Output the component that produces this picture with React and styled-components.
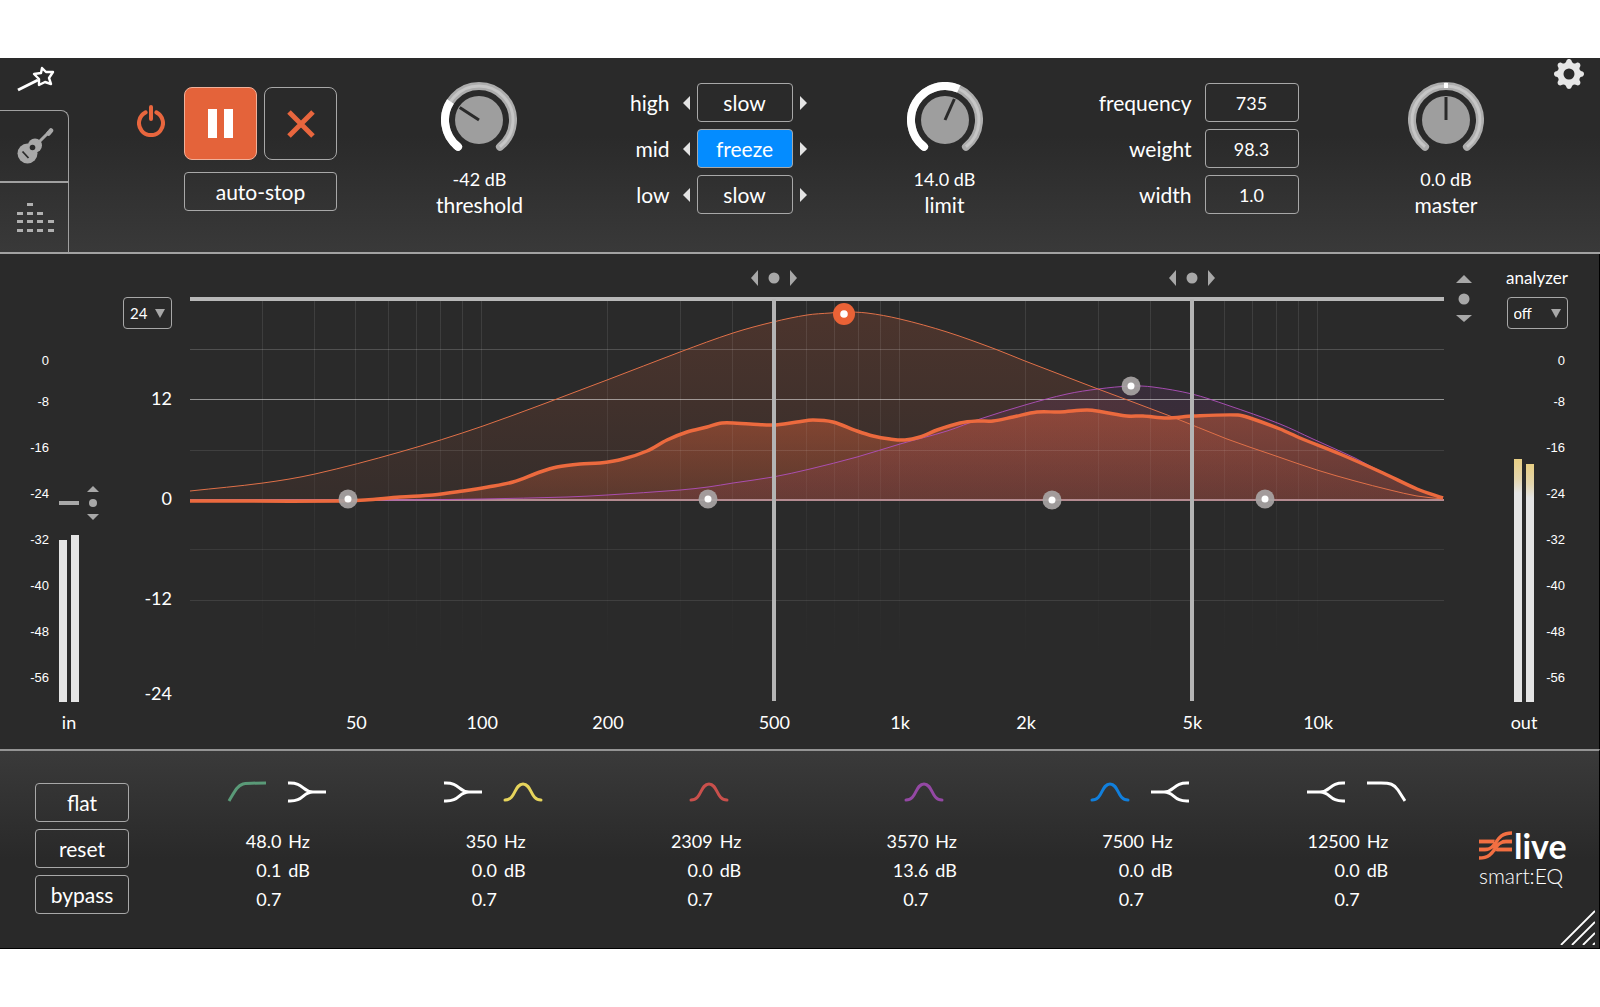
import { useState } from "react";
import styled, { createGlobalStyle } from "styled-components";
import { BsGearFill } from "react-icons/bs";

const FREQUENCIES = [
  30, 40, 50, 60, 70, 80, 90, 100, 200, 300, 400, 600, 700, 800, 900, 1000,
  2000, 3000, 4000, 6000, 7000, 8000, 9000, 10000,
];

const AXIS = [
  { hz: 50, text: "50" },
  { hz: 100, text: "100" },
  { hz: 200, text: "200" },
  { hz: 500, text: "500" },
  { hz: 1000, text: "1k" },
  { hz: 2000, text: "2k" },
  { hz: 5000, text: "5k" },
  { hz: 10000, text: "10k" },
];

const SCALE = ["0", "-8", "-16", "-24", "-32", "-40", "-48", "-56"];

const BANDS = [
  { id: 1, icons: [["cut", "#5a9a78"], ["join", "#fff"]], freq: "48.0", gain: "0.1", q: "0.7" },
  { id: 2, icons: [["join", "#fff"], ["bell", "#e6d45c"]], freq: "350", gain: "0.0", q: "0.7" },
  { id: 3, icons: [["bell", "#c9504c"]], freq: "2309", gain: "0.0", q: "0.7" },
  { id: 4, icons: [["bell", "#9448a4"]], freq: "3570", gain: "13.6", q: "0.7" },
  { id: 5, icons: [["bell", "#117fdc"], ["split", "#fff"]], freq: "7500", gain: "0.0", q: "0.7" },
  { id: 6, icons: [["split", "#fff"], ["highcut", "#fff"]], freq: "12500", gain: "0.0", q: "0.7" },
];

const SHAPES = {
  cut: "M2 20 C8 10 10 5 16 3 C22 2 30 2 39 2",
  highcut: "M1 2 H15 C24 2 28 3 32 9 L39 20",
  join: "M1 2 C17 1 15 11 26 11 H39 M1 20 C17 21 15 11 26 11",
  split: "M39 2 C23 1 25 11 14 11 H1 M39 20 C23 21 25 11 14 11",
  bell: "M2 19 C13 19 11 3 20 3 C29 3 27 19 38 19",
};

const WEIGHT = [
  [0, 231], [73, 223], [125, 214], [210, 192], [293, 166], [417, 120], [490, 92],
  [543, 73], [583, 62], [617, 55], [640, 53], [654, 52], [677, 53], [710, 59],
  [757, 72], [805, 89], [835, 101], [908, 129], [980, 156],
  [1037, 179], [1083, 195], [1127, 210], [1165, 221], [1200, 230], [1227, 236], [1253, 239],
];

const PURPLE = [
  [0, 240], [210, 240], [290, 239], [377, 237], [417, 235], [490, 230], [518, 227],
  [543, 223], [583, 217], [620, 209], [667, 197], [710, 184], [757, 171], [790, 159],
  [835, 145], [877, 134], [908, 129], [941, 126], [963, 127], [1002, 134],
  [1037, 145], [1090, 164], [1123, 179], [1165, 198], [1180, 206], [1226, 228], [1253, 239],
];

const FILTER = [
  [0, 241], [150, 241], [175, 240], [210, 237], [243, 235], [273, 231], [298, 227],
  [323, 222], [350, 212], [367, 207], [390, 204], [410, 203], [433, 199], [457, 191],
  [477, 180], [497, 172], [517, 167], [532, 163], [560, 164], [583, 165], [607, 162],
  [623, 160], [643, 162], [667, 171], [683, 176], [700, 179], [715, 180], [730, 177],
  [747, 170], [770, 163], [787, 161], [803, 161], [823, 157], [847, 152], [870, 152],
  [897, 150], [913, 152], [937, 156], [953, 156], [977, 158], [1003, 156], [1048, 155],
  [1060, 158], [1090, 169], [1110, 178], [1150, 194], [1193, 213], [1227, 229], [1253, 238],
];

const NODES = [
  [158, 239], [518, 239], [862, 240], [1075, 239], [941, 126],
];

const toX = (hz) => 418 * Math.log10(hz / 20);

function slope(points, i) {
  const a = points[Math.max(i - 1, 0)];
  const b = points[Math.min(i + 1, points.length - 1)];
  return (b[1] - a[1]) / (b[0] - a[0]);
}

// cubic spline through all the points, x always grows
function toPath(points) {
  let d = `M${points[0][0]} ${points[0][1]}`;
  for (let i = 0; i < points.length - 1; i++) {
    const [x1, y1] = points[i];
    const [x2, y2] = points[i + 1];
    const third = (x2 - x1) / 3;
    d += ` C${x1 + third} ${y1 + third * slope(points, i)}`;
    d += ` ${x2 - third} ${y2 - third * slope(points, i + 1)} ${x2} ${y2}`;
  }
  return d;
}

const toArea = (points) => `${toPath(points)} L1253 240 L0 240 Z`;

function polar(angle, r) {
  const rad = (angle * Math.PI) / 180;
  return [38 + r * Math.sin(rad), 38 - r * Math.cos(rad)];
}

function arc(from, to) {
  const [x1, y1] = polar(from, 34);
  const [x2, y2] = polar(to, 34);
  return `M${x1} ${y1} A34 34 0 ${to - from > 180 ? 1 : 0} 1 ${x2} ${y2}`;
}

function Knob({ label, value, angle, bipolar }) {
  const [px, py] = polar(angle, 23);
  return (
    <KnobLabel>
      <Dial>
        <svg width="76" height="76" viewBox="0 0 76 76">
          <path d={arc(-142, 142)} fill="none" stroke="#adadad" strokeWidth="8" strokeLinecap="round" />
          <path d={arc(-142, 142)} fill="none" stroke="#c6c6c6" strokeWidth="3" />
          {bipolar ? (
            <rect x="36" y="1" width="4" height="5" fill="#fff" />
          ) : (
            <>
              <path d={arc(-142, -138)} fill="none" stroke="#fff" strokeWidth="8" strokeLinecap="round" />
              <path d={arc(-142, angle)} fill="none" stroke="#fff" strokeWidth="8" />
            </>
          )}
          <circle cx="38" cy="38" r="24" fill="#9e9e9e" />
          <path d={`M38 38 L${px} ${py}`} stroke="#2a2a2a" strokeWidth="3" />
        </svg>
        <HiddenRange type="range" min="-142" max="142" defaultValue={angle} aria-label={label} />
      </Dial>
      <span>{value}</span>
      <span>{label}</span>
    </KnobLabel>
  );
}

function Speed({ label, value, active }) {
  return (
    <SpeedRow>
      <SpeedLabel>{label}</SpeedLabel>
      <Arrow aria-label={`${label} slower`}>
        <svg width="7" height="14" viewBox="0 0 7 14"><path d="M7 0 V14 L0 7 Z" fill="#e4e4e4" /></svg>
      </Arrow>
      <Box width={96} active={active}>{value}</Box>
      <Arrow aria-label={`${label} faster`}>
        <svg width="7" height="14" viewBox="0 0 7 14"><path d="M0 0 V14 L7 7 Z" fill="#e4e4e4" /></svg>
      </Arrow>
    </SpeedRow>
  );
}

function Field({ label, initial }) {
  const [value, setValue] = useState(initial);
  return (
    <FieldRow>
      <span>{label}</span>
      <input value={value} onChange={(e) => setValue(e.target.value)} />
    </FieldRow>
  );
}

function Picker({ label, options, width }) {
  return (
    <PickerBox width={width}>
      <select aria-label={label}>
        {options.map((o) => (
          <option key={o}>{o}</option>
        ))}
      </select>
      <svg width="10" height="9" viewBox="0 0 10 9"><path d="M0 0 H10 L5 9 Z" fill="#a8a8a8" /></svg>
    </PickerBox>
  );
}

function Crossover({ hz }) {
  const x = Math.round(toX(hz));
  return (
    <g>
      <rect x={x - 2} y="39" width="4" height="402" fill="#b4b4b4" />
      <g fill="#a8a8a8">
        <path d={`M${x - 16} 10 V26 L${x - 23} 18 Z`} />
        <circle cx={x} cy="18" r="5.5" />
        <path d={`M${x + 16} 10 V26 L${x + 23} 18 Z`} />
      </g>
    </g>
  );
}

function Chart() {
  return (
    <Plot viewBox="0 0 1254 480" role="img" aria-label="equalizer curve">
      <defs>
        <linearGradient id="grid" gradientUnits="userSpaceOnUse" x1="0" y1="40" x2="0" y2="400">
          <stop offset="0" stopColor="#fff" stopOpacity="0.1" />
          <stop offset="0.5" stopColor="#fff" stopOpacity="0.05" />
          <stop offset="1" stopColor="#fff" stopOpacity="0" />
        </linearGradient>
        <linearGradient id="weight" gradientUnits="userSpaceOnUse" x1="0" y1="50" x2="0" y2="240">
          <stop offset="0" stopColor="#e8643a" stopOpacity="0.18" />
          <stop offset="1" stopColor="#e8643a" stopOpacity="0.06" />
        </linearGradient>
        <linearGradient id="filter" gradientUnits="userSpaceOnUse" x1="0" y1="150" x2="0" y2="240">
          <stop offset="0" stopColor="#e8643a" stopOpacity="0.42" />
          <stop offset="1" stopColor="#e8643a" stopOpacity="0.2" />
        </linearGradient>
        <linearGradient id="purple" gradientUnits="userSpaceOnUse" x1="0" y1="126" x2="0" y2="240">
          <stop offset="0" stopColor="#9040a0" stopOpacity="0.14" />
          <stop offset="1" stopColor="#b04070" stopOpacity="0.14" />
        </linearGradient>
      </defs>

      <path d={toArea(WEIGHT)} fill="url(#weight)" />
      <path d={toArea(PURPLE)} fill="url(#purple)" />
      <path d={toArea(FILTER)} fill="url(#filter)" />

      {FREQUENCIES.map((hz) => (
        <rect key={hz} x={Math.floor(toX(hz)) - 1} y="41" width="1" height="360" fill="url(#grid)" />
      ))}
      <g fill="#fff">
        <rect y="89" width="1254" height="1" fillOpacity="0.18" />
        <rect y="139" width="1254" height="1" fillOpacity="0.5" />
        <rect y="190" width="1254" height="1" fillOpacity="0.1" />
        <rect y="289" width="1254" height="1" fillOpacity="0.08" />
        <rect y="340" width="1254" height="1" fillOpacity="0.1" />
      </g>
      <rect y="239" width="1254" height="2" fill="#b48a90" />
      <rect y="37" width="1254" height="4" fill="#b8b8b8" />

      <path d={toPath(PURPLE)} fill="none" stroke="#b050bc" strokeOpacity="0.9" />
      <path d={toPath(WEIGHT)} fill="none" stroke="#e07048" />
      <path d={toPath(FILTER)} fill="none" stroke="#ec6a3e" strokeWidth="3.5" />

      <Crossover hz={500} />
      <Crossover hz={5000} />

      {NODES.map(([x, y]) => (
        <g key={x}>
          <circle cx={x} cy={y} r="9.5" fill="#a8a4a4" fillOpacity="0.92" />
          <circle cx={x} cy={y} r="3.5" fill="#fff" />
        </g>
      ))}
      <circle cx="654" cy="54" r="11" fill="#ea6236" />
      <circle cx="654" cy="54" r="3.8" fill="#fff" />

      {AXIS.map((tick) => (
        <text key={tick.hz} x={toX(tick.hz)} y="469" textAnchor="middle">{tick.text}</text>
      ))}
    </Plot>
  );
}

export default function App() {
  return (
    <Page>
      <GlobalStyle />
      <Header>
        <Rail>
          <RailTop aria-label="learn">
            <svg width="38" height="26" viewBox="0 0 38 26" fill="none" stroke="#fff">
              <path d="M1 24 L21 14" strokeWidth="3" />
              <path d="M25 2 L29 6 L36 6 L32 12 L34 18 L28 16 L22 19 L22 13 L17 8 L24 7 Z" strokeWidth="2.4" strokeLinejoin="round" />
            </svg>
          </RailTop>
          <RailTab first aria-label="profile">
            <svg width="37" height="37" viewBox="0 0 37 37">
              <g fill="#a8a8a8">
                <circle cx="10.5" cy="25.5" r="10" />
                <circle cx="18" cy="17.5" r="7" />
              </g>
              <path d="M19 17 L32 4" stroke="#a8a8a8" strokeWidth="3" />
              <path d="M31.5 5.5 L34 2.5" stroke="#a8a8a8" strokeWidth="4.5" strokeLinecap="round" />
              <circle cx="15.5" cy="19.5" r="2.8" fill="#2a2a2a" />
              <path d="M5.5 23.5 L11.5 30" stroke="#2a2a2a" strokeWidth="1.8" />
            </svg>
          </RailTab>
          <RailTab aria-label="states">
            <svg width="37" height="31" viewBox="0 0 37 31" fill="#b0b0b0">
              <rect x="10" y="1" width="6" height="3" />
              {[0, 10, 20].map((x) => <rect key={x} x={x} y="10" width="6" height="3" />)}
              {[0, 10, 20, 31].map((x) => <rect key={x} x={x} y="18" width="6" height="3" />)}
              {[0, 10, 20, 31].map((x) => <rect key={x} x={x} y="27" width="6" height="3" />)}
            </svg>
          </RailTab>
        </Rail>
        <Controls>
          <Transport>
            <IconButton aria-label="power">
              <svg width="28" height="32" viewBox="0 0 28 32" fill="none" stroke="#e8663e" strokeWidth="4">
                <path d="M8.6 7.4 A12 12 0 1 0 19.4 7.4" strokeLinecap="round" />
                <path d="M14 2 V14" strokeLinecap="round" />
              </svg>
            </IconButton>
            <Buttons>
              <Square active aria-label="pause">
                <svg width="25" height="29" viewBox="0 0 25 29" fill="#fff">
                  <rect width="9" height="29" />
                  <rect x="16" width="9" height="29" />
                </svg>
              </Square>
              <Square aria-label="cancel">
                <svg width="28" height="28" viewBox="0 0 28 28" stroke="#e8663e" strokeWidth="5">
                  <path d="M2 2 L26 26 M26 2 L2 26" />
                </svg>
              </Square>
              <AutoStop>auto-stop</AutoStop>
            </Buttons>
          </Transport>
          <Knob label="threshold" value="-42 dB" angle={-57} />
          <Stack>
            <Speed label="high" value="slow" />
            <Speed label="mid" value="freeze" active />
            <Speed label="low" value="slow" />
          </Stack>
          <Knob label="limit" value="14.0 dB" angle={24} />
          <Stack>
            <Field label="frequency" initial="735" />
            <Field label="weight" initial="98.3" />
            <Field label="width" initial="1.0" />
          </Stack>
          <Knob label="master" value="0.0 dB" angle={0} bipolar />
          <Gear aria-label="settings">
            <BsGearFill size={30} color="#e6e6e6" />
          </Gear>
        </Controls>
      </Header>

      <Display>
        <InputMeter>
          <Scale>
            {SCALE.map((s) => <li key={s}>{s}</li>)}
          </Scale>
          <MeterStack top={144}>
            <LevelHandle>
              <i />
              <svg width="12" height="34" viewBox="0 0 12 34" fill="#a8a8a8">
                <path d="M0 6 H12 L6 0 Z" />
                <circle cx="6" cy="17" r="4" />
                <path d="M0 28 H12 L6 34 Z" />
              </svg>
            </LevelHandle>
            <Bars>
              <Bar style={{ height: 162 }} />
              <Bar style={{ height: 167 }} />
            </Bars>
            <MeterName>in</MeterName>
          </MeterStack>
        </InputMeter>
        <GainAxis>
          <Picker label="range" options={["24", "12", "6"]} width={49} />
          <ul>
            <li>12</li>
            <li>0</li>
            <li>-12</li>
            <li>-24</li>
          </ul>
        </GainAxis>
        <ChartArea>
          <Chart />
        </ChartArea>
        <RangeHandle width="16" height="50" viewBox="0 0 16 50" fill="#a8a8a8">
          <path d="M0 9 H16 L8 1 Z" />
          <circle cx="8" cy="25" r="5.5" />
          <path d="M0 41 H16 L8 48 Z" />
        </RangeHandle>
        <OutputPanel>
          <Analyzer>
            <span>analyzer</span>
            <Picker label="analyzer" options={["off", "in", "out"]} width={61} />
          </Analyzer>
          <OutputMeter>
            <MeterStack top={117}>
              <Bars>
                <Bar hot style={{ height: 243 }} />
                <Bar hot style={{ height: 238 }} />
              </Bars>
              <MeterName>out</MeterName>
            </MeterStack>
            <Scale>
              {SCALE.map((s) => <li key={s}>{s}</li>)}
            </Scale>
          </OutputMeter>
        </OutputPanel>
      </Display>

      <Footer>
        <FooterButtons>
          <Box width={94}>flat</Box>
          <Box width={94}>reset</Box>
          <Box width={94}>bypass</Box>
        </FooterButtons>
        <Bands>
          {BANDS.map((band) => (
            <Band key={band.id}>
              <BandIcons>
                {band.icons.map(([shape, color]) => (
                  <IconButton key={shape} aria-label={`band ${band.id} ${shape}`}>
                    <svg width="40" height="22" viewBox="0 0 40 22" fill="none" stroke={color} strokeWidth="3">
                      <path d={SHAPES[shape]} strokeLinecap={shape === "bell" ? "round" : "butt"} />
                    </svg>
                  </IconButton>
                ))}
              </BandIcons>
              <Values>
                <b>{band.freq}</b>
                <span>Hz</span>
                <b>{band.gain}</b>
                <span>dB</span>
                <b>{band.q}</b>
              </Values>
            </Band>
          ))}
        </Bands>
        <Brand>
          <BrandLine>
            <svg width="33" height="30" viewBox="0 0 33 30" fill="none" stroke="#f26f42" strokeWidth="3.4">
              <path d="M0 10.5 H33 M0 18.5 H33" />
              <path d="M0 27 C18 27 14 2 33 2" stroke="#2a2a2a" strokeWidth="6" />
              <path d="M0 27 C18 27 14 10.5 27 10.5 H33 M0 18.5 H6 C19 18.5 15 2 33 2" />
              <path d="M18 18.5 H33 M0 10.5 H15" />
            </svg>
            <strong>live</strong>
          </BrandLine>
          <span>smart:EQ</span>
        </Brand>
        <Grip width="35" height="35" viewBox="0 0 35 35" stroke="#fff" strokeWidth="1.8">
          <path d="M1 35 L35 1 M12 35 L35 12 M23 35 L35 23 M33 35 L35 33" />
        </Grip>
      </Footer>
    </Page>
  );
}

const GlobalStyle = createGlobalStyle`
  * {
    box-sizing: border-box;
  }

  body {
    margin: 0;
    background-color: #fff;
  }

  ul {
    margin: 0;
    padding: 0;
    list-style: none;
  }

  svg {
    display: block;
  }

  button, input, select {
    font: inherit;
    color: inherit;
    margin: 0;
    padding: 0;
    background: none;
    border: none;
  }
`;

const Page = styled.main`
  margin-top: 58px;
  font-family: Lato, "Liberation Sans", sans-serif;
  font-size: 21px;
  line-height: 26px;
  color: #fff;
  background-color: #2a2a2a;
`;

const Header = styled.header`
  display: flex;
  background: linear-gradient(#2a2a2a 40%, #393939);
  border-bottom: 2px solid #a2a2a2;
`;

const Rail = styled.nav`
  width: 69px;
  display: flex;
  flex-direction: column;
`;

const RailTop = styled.button`
  height: 52px;
  padding: 8px 0 18px 17px;
`;

const RailTab = styled.button`
  height: 71px;
  display: flex;
  align-items: center;
  padding-left: 17px;
  border-top: ${(props) => (props.first ? "1px" : "2px")} solid #a0a0a0;
  border-right: 1px solid #a0a0a0;
  border-radius: ${(props) => (props.first ? "0 8px 0 0" : "0")};
`;

const Controls = styled.div`
  flex: 1;
  display: grid;
  grid-template-columns: 336fr 149fr 326fr 129fr 378fr 118fr 95fr;
  justify-items: center;
  align-items: start;
`;

const Transport = styled.div`
  display: flex;
  gap: 19px;
  padding-top: 29px;
`;

const IconButton = styled.button`
  align-self: flex-start;
  cursor: pointer;

  ${Transport} > & {
    padding-top: 18px;
  }
`;

const Buttons = styled.div`
  display: grid;
  grid-template-columns: 73px 73px;
  column-gap: 7px;
  row-gap: 12px;
`;

const Square = styled.button`
  height: 73px;
  display: flex;
  align-items: center;
  justify-content: center;
  border: 1px solid ${(props) => (props.active ? "#f0b09a" : "#a8a8a8")};
  border-radius: 8px;
  background-color: ${(props) => (props.active ? "#e4633a" : "transparent")};
`;

const Box = styled.button`
  width: ${(props) => props.width}px;
  height: 39px;
  border: 1px solid #a8a8a8;
  border-radius: 4px;
  background-color: ${(props) => (props.active ? "#048cff" : "transparent")};
`;

const AutoStop = styled(Box)`
  grid-column: 1 / 3;
  width: 100%;
`;

const KnobLabel = styled.label`
  display: flex;
  flex-direction: column;
  align-items: center;
  padding-top: 24px;

  span:first-of-type {
    font-size: 18px;
  }
`;

const Dial = styled.div`
  position: relative;
  margin-bottom: 8px;
`;

const HiddenRange = styled.input`
  position: absolute;
  inset: 0;
  width: 100%;
  height: 100%;
  opacity: 0;
`;

const Stack = styled.div`
  display: flex;
  flex-direction: column;
  gap: 7px;
  padding-top: 25px;
`;

const SpeedRow = styled.div`
  display: flex;
  align-items: center;
  gap: 7px;
`;

const SpeedLabel = styled.span`
  width: 42px;
  margin-right: 6px;
  text-align: right;
`;

const Arrow = styled.button`
  width: 7px;
  height: 14px;
`;

const FieldRow = styled.label`
  display: flex;
  align-items: center;
  gap: 13px;

  span {
    width: 94px;
    text-align: right;
  }

  input {
    width: 94px;
    height: 39px;
    border: 1px solid #a8a8a8;
    border-radius: 4px;
    font-size: 18px;
    text-align: center;
  }
`;

const Gear = styled.button`
  justify-self: end;
  margin: 1px 16px 0 0;
`;

const Display = styled.section`
  display: grid;
  grid-template-columns: 123px 49px minmax(0, 1fr) 16px 127px;
  align-items: start;
  border-right: 1px solid #000;
`;

const InputMeter = styled.div`
  display: flex;
  padding-top: 88px;
`;

const Scale = styled.ul`
  width: 49px;
  font-family: "Liberation Sans", sans-serif;
  font-size: 13px;
  text-align: right;

  li {
    line-height: 46px;
  }

  li:first-child {
    line-height: 37px;
  }
`;

const MeterStack = styled.div`
  margin-left: 10px;
  padding-top: ${(props) => props.top}px;
`;

const LevelHandle = styled.div`
  display: flex;
  align-items: center;
  gap: 8px;
  margin-bottom: 15px;

  i {
    width: 20px;
    height: 4px;
    background-color: #a8a8a8;
  }
`;

const Bars = styled.div`
  display: flex;
  align-items: flex-end;
  gap: 4px;
`;

const Bar = styled.div`
  width: 8px;
  background: ${(props) =>
    props.hot ? "linear-gradient(#e8cf84, #e4d6ae 20px, #e4e4e4 34px)" : "#e4e4e4"};
`;

const MeterName = styled.div`
  width: 20px;
  margin-top: 7px;
  display: flex;
  justify-content: center;
  font-size: 18px;
`;

const GainAxis = styled.div`
  padding-top: 43px;
  font-size: 18px;
  text-align: right;

  ul {
    margin-top: 19px;
  }

  li {
    line-height: 100px;
  }

  li:last-child {
    line-height: 90px;
  }
`;

const PickerBox = styled.div`
  width: ${(props) => props.width}px;
  display: grid;
  align-items: center;

  select {
    grid-area: 1 / 1;
    height: 32px;
    padding-left: 6px;
    appearance: none;
    border: 1px solid #a8a8a8;
    border-radius: 4px;
    font-size: 15px;
  }

  option {
    background-color: #2a2a2a;
  }

  svg {
    grid-area: 1 / 1;
    justify-self: end;
    margin-right: 7px;
    pointer-events: none;
  }
`;

const ChartArea = styled.div`
  padding: 6px 12px 9px 18px;
`;

const Plot = styled.svg`
  width: 100%;
  height: auto;
  overflow: visible;

  text {
    fill: #fff;
    font-size: 18px;
  }
`;

const RangeHandle = styled.svg`
  margin-top: 20px;
`;

const OutputPanel = styled.div`
  padding: 14px 0 0 34px;
`;

const Analyzer = styled.div`
  width: 62px;
  display: flex;
  flex-direction: column;
  align-items: center;
  gap: 9px;
  font-size: 17px;
  line-height: 20px;
`;

const OutputMeter = styled.div`
  display: flex;
  margin-top: 13px;

  ${MeterStack} {
    margin-left: 8px;
  }

  ${Scale} {
    width: 31px;
  }
`;

const Footer = styled.footer`
  position: relative;
  display: flex;
  min-height: 200px;
  background: linear-gradient(#3a3a3a, #292929 55%);
  border-top: 2px solid #949494;
  border-right: 1px solid #000;
  border-bottom: 1px solid #000;
`;

const FooterButtons = styled.div`
  display: flex;
  flex-direction: column;
  gap: 7px;
  padding: 32px 48px 0 35px;
`;

const Bands = styled.div`
  flex: 1;
  display: grid;
  grid-template-columns: repeat(6, 1fr);
  padding-top: 30px;
`;

const Band = styled.div`
  font-size: 18px;
`;

const BandIcons = styled.div`
  display: flex;
  justify-content: center;
  gap: 20px;
  padding-right: 15px;
`;

const Values = styled.div`
  display: grid;
  grid-template-columns: 1fr 1fr;
  column-gap: 7px;
  margin-top: 24px;
  line-height: 29px;

  b {
    font-weight: 400;
    text-align: right;
  }
`;

const Brand = styled.div`
  width: 128px;
  padding: 78px 0 0 8px;
  font-weight: 300;
`;

const BrandLine = styled.div`
  display: flex;
  align-items: center;
  gap: 2px;
  line-height: 34px;

  strong {
    font-size: 34px;
    font-weight: 700;
  }
`;

const Grip = styled.svg`
  position: absolute;
  right: 4px;
  bottom: 3px;
`;
